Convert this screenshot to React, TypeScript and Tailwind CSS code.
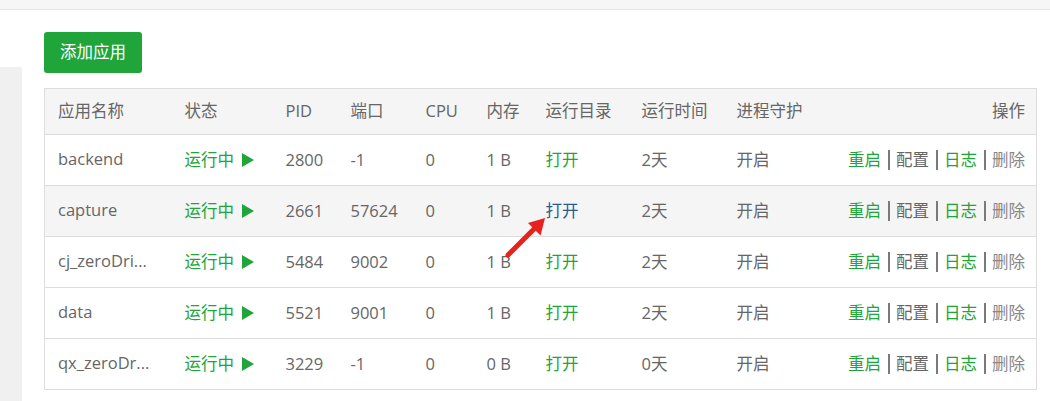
import React from "react";

type Row = {
    name: string;
    pid: string;
    port: string;
    cpu: string;
    mem: string;
    uptime: string;
    hover?: boolean;
};

const rows: Row[] = [
    { name: "backend", pid: "2800", port: "-1", cpu: "0", mem: "1 B", uptime: "2天" },
    { name: "capture", pid: "2661", port: "57624", cpu: "0", mem: "1 B", uptime: "2天", hover: true },
    { name: "cj_zeroDri...", pid: "5484", port: "9002", cpu: "0", mem: "1 B", uptime: "2天" },
    { name: "data", pid: "5521", port: "9001", cpu: "0", mem: "1 B", uptime: "2天" },
    { name: "qx_zeroDr...", pid: "3229", port: "-1", cpu: "0", mem: "0 B", uptime: "0天" },
];

const cols = [
    { label: "应用名称", w: "w-[127px]" },
    { label: "状态", w: "w-[101px]" },
    { label: "PID", w: "w-[65px]" },
    { label: "端口", w: "w-[75px]" },
    { label: "CPU", w: "w-[61px]" },
    { label: "内存", w: "w-[59px]" },
    { label: "运行目录", w: "w-[96px]" },
    { label: "运行时间", w: "w-[95px]" },
    { label: "进程守护", w: "w-[100px]" },
];

function Play() {
    return (
        <svg width="12" height="14" viewBox="0 0 12 14" className="ml-[8px] inline-block">
            <polygon points="0,0 12,7 0,14" fill="#20a53a" />
        </svg>
    );
}

function Bar() {
    return <span className="inline-block w-[2px] h-[20px] ml-[7px] mr-[6px] bg-[#7a7a7a] align-middle" />;
}

function Ops() {
    return (
        <span className="inline-flex items-center whitespace-nowrap">
            <span className="text-[#20a53a]">重启</span>
            <Bar />
            <span className="text-[#666]">配置</span>
            <Bar />
            <span className="text-[#20a53a]">日志</span>
            <Bar />
            <span className="text-[#888]">删除</span>
        </span>
    );
}

export default function App() {
    return (
        <div
            className="relative w-[1050px] h-[401px] overflow-hidden bg-white text-[#666] text-[16.5px]"
            style={{ fontFamily: '"Open Sans", "Noto Sans CJK SC", sans-serif' }}
        >
            {/* top strip */}
            <div className="h-[10px] bg-[#f6f6f6] border-b border-[#e9e9e9]" />

            <div className="flex">
                <div className="w-[22px] mt-[57px] h-[340px] bg-[#f0f0f0]" />

                <div className="pl-[22px] pt-[22px]">
                    <button className="h-[41px] w-[98px] rounded-[3px] bg-[#20a53a] text-white text-[16.5px] leading-none">
                        添加应用
                    </button>

                    <table className="mt-[15px] w-[993px] table-fixed border-collapse border border-[#ddd]">
                        <thead>
                            <tr className="h-[46px] bg-[#f5f5f5]">
                                {cols.map((c) => (
                                    <th key={c.label} className={`${c.w} pl-[13px] text-left font-normal`}>
                                        {c.label}
                                    </th>
                                ))}
                                <th className="pr-[11px] text-right font-normal">操作</th>
                            </tr>
                        </thead>
                        <tbody>
                            {rows.map((r) => (
                                <tr
                                    key={r.name}
                                    className={`h-[51px] border-t border-[#ddd] ${r.hover ? "bg-[#f5f5f5]" : "bg-white"}`}
                                >
                                    <td className="pl-[13px] pb-[2px] whitespace-nowrap">{r.name}</td>
                                    <td className="pl-[13px] whitespace-nowrap text-[#20a53a]">
                                        <span className="inline-flex items-center">
                                            运行中
                                            <Play />
                                        </span>
                                    </td>
                                    <td className="pl-[13px]">{r.pid}</td>
                                    <td className="pl-[13px]">{r.port}</td>
                                    <td className="pl-[13px]">{r.cpu}</td>
                                    <td className="pl-[13px] whitespace-nowrap">{r.mem}</td>
                                    <td className={`pl-[13px] ${r.hover ? "text-[#2c5a8c]" : "text-[#20a53a]"}`}>打开</td>
                                    <td className="pl-[13px]">{r.uptime}</td>
                                    <td className="pl-[13px]">开启</td>
                                    <td className="pr-[11px] text-right">
                                        <Ops />
                                    </td>
                                </tr>
                            ))}
                        </tbody>
                    </table>
                </div>
            </div>

            {/* red pointer arrow */}
            <svg className="absolute left-[500px] top-[212px]" width="50" height="48" viewBox="0 0 50 48">
                <line x1="8" y1="43" x2="35" y2="16" stroke="#e8201e" strokeWidth="5" strokeLinecap="round" />
                <polygon points="45,6 40.5,23.5 28,11" fill="#e8201e" />
            </svg>
        </div>
    );
}
